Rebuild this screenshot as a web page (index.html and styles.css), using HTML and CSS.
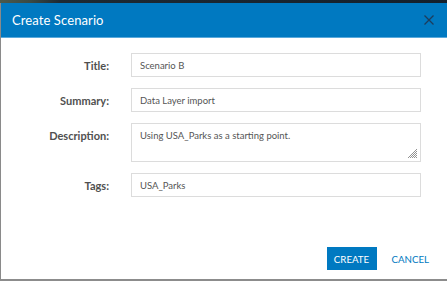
FILE: index.html
```html
<!DOCTYPE html>
<html>
<head>
<meta charset="utf-8">
<link rel="stylesheet" href="styles.css">
</head>
<body>
<div class="topstrip"></div>
<div class="dialog">
  <div class="header">
    <span class="title">Create Scenario</span>
    <svg class="close" width="10" height="10" viewBox="0 0 10 10"><path d="M0.5 0.5L9.5 9.5M9.5 0.5L0.5 9.5" stroke="#1d3d5c" stroke-width="1.3" fill="none"/></svg>
  </div>
  <div class="form">
    <label class="lbl">Title:</label>
    <div class="field">Scenario B</div>
    <label class="lbl">Summary:</label>
    <div class="field">Data Layer import</div>
    <label class="lbl lbl-top">Description:</label>
    <div class="field area">Using USA_Parks as a starting point.
      <svg class="grip" width="10" height="10" viewBox="0 0 10 10"><path d="M9 2L2 9M9 4L4 9M9 6L6 9M9 8L8 9M9 0L0 9" stroke="#777" stroke-width="0.8" fill="none"/></svg>
    </div>
    <label class="lbl">Tags:</label>
    <div class="field">USA_Parks</div>
  </div>
  <div class="actions">
    <button class="btn primary">CREATE</button>
    <button class="btn link">CANCEL</button>
  </div>
</div>
</body>
</html>
```
FILE: styles.css
```css
html, body {
  margin: 0;
  padding: 0;
  width: 447px;
  height: 281px;
  overflow: hidden;
  background: #fff;
  font-family: "Lato", "Open Sans", sans-serif;
}
.topstrip {
  height: 3px;
  background: linear-gradient(90deg, #4b5a4c 0, #3a4a45 30px, #1e2a33 60px, #14202c 100%);
}
.dialog {
  height: 276px;
  border-left: 1px solid #8a8a8a;
  border-bottom: 2px solid #8c8c8c;
  display: flex;
  flex-direction: column;
}
.header {
  height: 34px;
  background: #0079c1;
  border-bottom: 1px solid #5aa9db;
  display: flex;
  align-items: center;
  justify-content: space-between;
  padding: 0 13px 0 11px;
}
.title {
  color: #fff;
  font-size: 13px;
  letter-spacing: 0.1px;
}
.close { display: block; }
.form {
  display: grid;
  grid-template-columns: 108px 290px;
  column-gap: 22px;
  row-gap: 11px;
  padding-top: 15px;
  align-items: center;
}
.lbl {
  text-align: right;
  font-weight: bold;
  font-size: 11px;
  color: #505050;
}
.lbl-top { align-self: start; padding-top: 6px; }
.field {
  box-sizing: border-box;
  height: 24px;
  border: 1px solid #dcdcdc;
  padding: 0 8px;
  font-size: 9.5px;
  color: #555;
  display: flex;
  align-items: center;
  position: relative;
}
.field.area {
  height: 39px;
  align-items: flex-start;
  padding-top: 6px;
  align-self: start;
}
.grip {
  position: absolute;
  right: 2px;
  bottom: 2px;
}
.actions {
  margin-top: auto;
  margin-bottom: 9px;
  display: flex;
  justify-content: flex-end;
  align-items: center;
  gap: 15px;
  padding-right: 18px;
}
.btn {
  font-family: "Lato", "Open Sans", sans-serif;
  font-size: 9.7px;
  border: none;
  background: none;
  padding: 0;
  cursor: pointer;
}
.btn.primary {
  background: #0079c1;
  color: #fff;
  width: 50px;
  height: 23px;
}
.btn.link {
  color: #0079c1;
  height: 23px;
}
```
